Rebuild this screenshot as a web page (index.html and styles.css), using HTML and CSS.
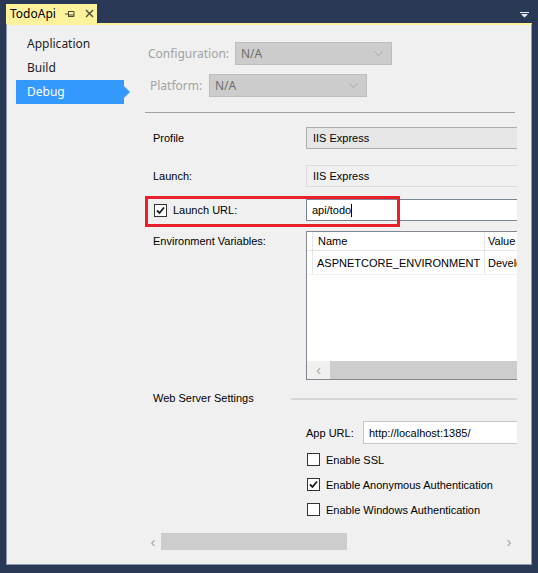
FILE: index.html
```html
<!DOCTYPE html>
<html>
<head>
<meta charset="utf-8">
<link rel="stylesheet" href="styles.css">
</head>
<body>
<div class="tabbar">
  <div class="tab">
    <span class="tab-title">TodoApi</span>
    <svg class="pin" width="10" height="8" viewBox="0 0 10 8"><path d="M0 4H3M3.5 1V7M3.5 1.5H9V6.5H3.5M3.5 5H9" fill="none" stroke="#4a4a3a" stroke-width="1"/></svg>
    <svg class="close" width="9" height="9" viewBox="0 0 9 9"><path d="M1 1L8 8M8 1L1 8" stroke="#4a4a3a" stroke-width="1.4"/></svg>
  </div>
  <svg class="menu-arrow" width="9" height="6" viewBox="0 0 9 6"><path d="M0 0H9V1H0Z M1 2H8L4.5 5.5Z" fill="#e8ecf5"/></svg>
</div>
<div class="panel">
  <nav class="sidebar">
    <div class="nav-item">Application</div>
    <div class="nav-item">Build</div>
    <div class="nav-item active">Debug</div>
  </nav>
  <div class="main">
    <div class="config">
      <div class="config-row conf">
        <span class="config-label">Configuration:</span>
        <div class="select wide"><span>N/A</span><svg width="9" height="5" viewBox="0 0 9 5"><path d="M0.5 0.5L4.5 4.5L8.5 0.5" fill="none" stroke="#a8a8a8"/></svg></div>
      </div>
      <div class="config-row plat">
        <span class="config-label">Platform:</span>
        <div class="select"><span>N/A</span><svg width="9" height="5" viewBox="0 0 9 5"><path d="M0.5 0.5L4.5 4.5L8.5 0.5" fill="none" stroke="#a8a8a8"/></svg></div>
      </div>
    </div>
    <div class="sep"></div>
    <div class="viewport">
      <div class="form">
        <div class="row row-profile">
          <span class="label">Profile</span>
          <div class="field combo">IIS Express</div>
        </div>
        <div class="row row-launch">
          <span class="label">Launch:</span>
          <div class="field flat">IIS Express</div>
        </div>
        <div class="row row-url">
          <span class="label check-label"><span class="checkbox checked"><svg width="11" height="11" viewBox="0 0 11 11"><path d="M2 5.5L4.5 8L9 2.5" fill="none" stroke="#1a1a1a" stroke-width="1.8"/></svg></span>Launch URL:</span>
          <div class="field input focus">api/todo<span class="caret"></span></div>
          <div class="highlight"></div>
        </div>
        <div class="row row-env">
          <span class="label">Environment Variables:</span>
          <div class="grid">
            <div class="grid-head">
              <span class="cell rh"></span>
              <span class="cell name">Name</span>
              <span class="cell value">Value</span>
            </div>
            <div class="grid-row">
              <span class="cell rh"></span>
              <span class="cell name">ASPNETCORE_ENVIRONMENT</span>
              <span class="cell value">Development</span>
            </div>
            <div class="grid-fill"></div>
            <div class="grid-scroll">
              <span class="arrow">&lsaquo;</span>
              <span class="thumb"></span>
            </div>
          </div>
        </div>
        <div class="row row-web">
          <span class="label">Web Server Settings</span>
          <span class="web-line"></span>
        </div>
        <div class="row row-app">
          <span class="app-label">App URL:</span>
          <div class="field input light">http://localhost:1385/</div>
        </div>
        <div class="checks">
          <div class="check"><span class="checkbox"></span>Enable SSL</div>
          <div class="check"><span class="checkbox checked"><svg width="11" height="11" viewBox="0 0 11 11"><path d="M2 5.5L4.5 8L9 2.5" fill="none" stroke="#1a1a1a" stroke-width="1.8"/></svg></span>Enable Anonymous Authentication</div>
          <div class="check"><span class="checkbox"></span>Enable Windows Authentication</div>
        </div>
      </div>
    </div>
    <div class="hscroll">
      <span class="harrow">&lsaquo;</span>
      <span class="hthumb"></span>
      <span class="hspace"></span>
      <span class="harrow">&rsaquo;</span>
    </div>
  </div>
</div>
</body>
</html>
```

FILE: styles.css
```css
* { box-sizing: border-box; }
html, body { margin: 0; padding: 0; }
body {
  width: 538px;
  height: 573px;
  background: #293955;
  overflow: hidden;
  font-family: "Noto Sans", sans-serif;
  font-size: 12px;
}
.tabbar {
  height: 23px;
  display: flex;
  align-items: flex-end;
  padding-left: 6px;
  position: relative;
}
.tab {
  width: 91px;
  height: 19px;
  background: #fff29d;
  display: flex;
  align-items: center;
  padding-left: 4px;
  color: #000;
  font-size: 12px;
}
.tab-title { line-height: 19px; }
.pin { margin-left: 9px; }
.close { margin-left: 10px; }
.menu-arrow {
  margin-left: auto;
  margin-right: 9px;
  align-self: flex-start;
  margin-top: 12px;
}
.panel {
  margin-left: 6px;
  width: 526px;
  height: 542px;
  background: #f0f0f0;
  border-top: 2px solid #fff29d;
  border-left: 1px solid #8c99b8;
  border-right: 1px solid #8c99b8;
  border-bottom: 1px solid #8c99b8;
  display: flex;
}
.sidebar {
  width: 133px;
  padding-top: 7px;
  padding-left: 9px;
  display: flex;
  flex-direction: column;
}
.nav-item {
  width: 108px;
  height: 24px;
  line-height: 24px;
  padding-left: 11px;
  color: #1e1e1e;
  position: relative;
}
.nav-item.active {
  background: #3399ff;
  color: #fff;
}
.nav-item.active::after {
  content: "";
  position: absolute;
  left: 108px;
  top: 6px;
  border-left: 6px solid #3399ff;
  border-top: 6px solid transparent;
  border-bottom: 6px solid transparent;
}
.main {
  width: 391px;
  display: flex;
  flex-direction: column;
}
.config {
  margin-top: 17px;
  display: flex;
  flex-direction: column;
  gap: 9px;
}
.config-row {
  display: flex;
  align-items: center;
  height: 23px;
  color: #a2a2a2;
}
.config-row.conf { padding-left: 8px; }
.config-row.conf .config-label { width: 87px; }
.config-row.plat { padding-left: 10px; }
.config-row.plat .config-label { width: 59px; }
.select {
  width: 158px;
  height: 23px;
  background: #cccccc;
  border: 1px solid #bdbdbd;
  display: flex;
  align-items: center;
  justify-content: space-between;
  padding: 0 8px 0 5px;
  color: #6e6e6e;
}
.select.wide { width: 157px; }
.sep {
  margin-top: 15px;
  margin-left: 5px;
  width: 370px;
  height: 1px;
  background: #a0a0a0;
}
.viewport {
  width: 377px;
  height: 417px;
  overflow: hidden;
}
.form {
  width: 460px;
  padding-top: 14px;
  font-family: "Liberation Sans", Arial, sans-serif;
  font-size: 11px;
  color: #000;
  display: flex;
  flex-direction: column;
}
.row {
  display: flex;
  align-items: center;
  position: relative;
}
.label {
  width: 166px;
  padding-left: 13px;
  flex: none;
}
.field {
  width: 240px;
  height: 22px;
  display: flex;
  align-items: center;
  padding-left: 6px;
  font-size: 11px;
}
.combo {
  background: #e6e6e6;
  border: 1px solid #adadad;
}
.flat {
  background: #f0f0f0;
  border: 1px solid #dcdcdc;
}
.row-launch { margin-top: 16px; }
.row-url { margin-top: 12px; }
.input {
  background: #fff;
  border: 1px solid #7a8494;
}
.input.focus { padding-left: 5px; }
.caret {
  display: inline-block;
  width: 1px;
  height: 13px;
  background: #000;
  margin-left: 0;
}
.check-label {
  display: flex;
  align-items: center;
  padding-left: 14px;
}
.checkbox {
  width: 13px;
  height: 13px;
  border: 1px solid #333;
  background: #fff;
  display: inline-flex;
  align-items: center;
  justify-content: center;
  margin-right: 6px;
  flex: none;
}
.highlight {
  position: absolute;
  left: 5px;
  top: -3px;
  width: 255px;
  height: 31px;
  border: 3px solid #e8202a;
}
.row-env {
  margin-top: 10px;
  align-items: flex-start;
}
.row-env .label { padding-top: 4px; }
.grid {
  width: 240px;
  height: 149px;
  background: #fff;
  border: 1px solid #828790;
  display: flex;
  flex-direction: column;
  font-size: 11px;
}
.grid-head, .grid-row {
  display: flex;
  flex: none;
}
.grid-head {
  height: 19px;
  border-bottom: 1px solid #e5e5e5;
}
.grid-row {
  height: 24px;
  border-bottom: 1px solid #f0f0f0;
}
.cell {
  display: flex;
  align-items: center;
  flex: none;
  white-space: nowrap;
  overflow: hidden;
}
.cell.rh {
  width: 6px;
  border-right: 1px solid #e5e5e5;
}
.cell.name {
  width: 172px;
  padding-left: 4px;
  border-right: 1px solid #e5e5e5;
}
.grid-head .cell.name { padding-left: 5px; }
.cell.value { padding-left: 3px; width: 60px; }
.grid-fill { flex: 1; }
.grid-scroll {
  height: 18px;
  display: flex;
  align-items: center;
  flex: none;
  background: #f0f0f0;
}
.grid-scroll .arrow {
  width: 23px;
  text-align: center;
  color: #a0a0a0;
  font-size: 14px;
  line-height: 18px;
}
.grid-scroll .thumb {
  flex: 1;
  height: 18px;
  background: #cdcdcd;
}
.row-web { margin-top: 11px; height: 14px; }
.row-web .label { width: 151px; }
.web-line {
  width: 230px;
  height: 2px;
  background: #d6d6d6;
  margin-top: 2px;
}
.row-app { margin-top: 16px; }
.app-label {
  margin-left: 166px;
  width: 57px;
  flex: none;
}
.field.light {
  border: 1px solid #c6c6c6;
  height: 23px;
  padding-left: 5px;
}
.checks {
  margin-top: 9px;
  padding-left: 167px;
  display: flex;
  flex-direction: column;
  gap: 12px;
}
.check {
  display: flex;
  align-items: center;
  height: 13px;
  font-size: 11px;
}
.hscroll {
  margin-top: 3px;
  margin-left: 5px;
  width: 372px;
  height: 17px;
  display: flex;
  align-items: center;
}
.harrow {
  width: 16px;
  text-align: center;
  color: #a0a0a0;
  font-size: 15px;
  line-height: 17px;
  font-family: "Liberation Sans", sans-serif;
}
.hthumb {
  width: 186px;
  height: 17px;
  background: #cdcdcd;
}
.hspace { flex: 1; }
```
